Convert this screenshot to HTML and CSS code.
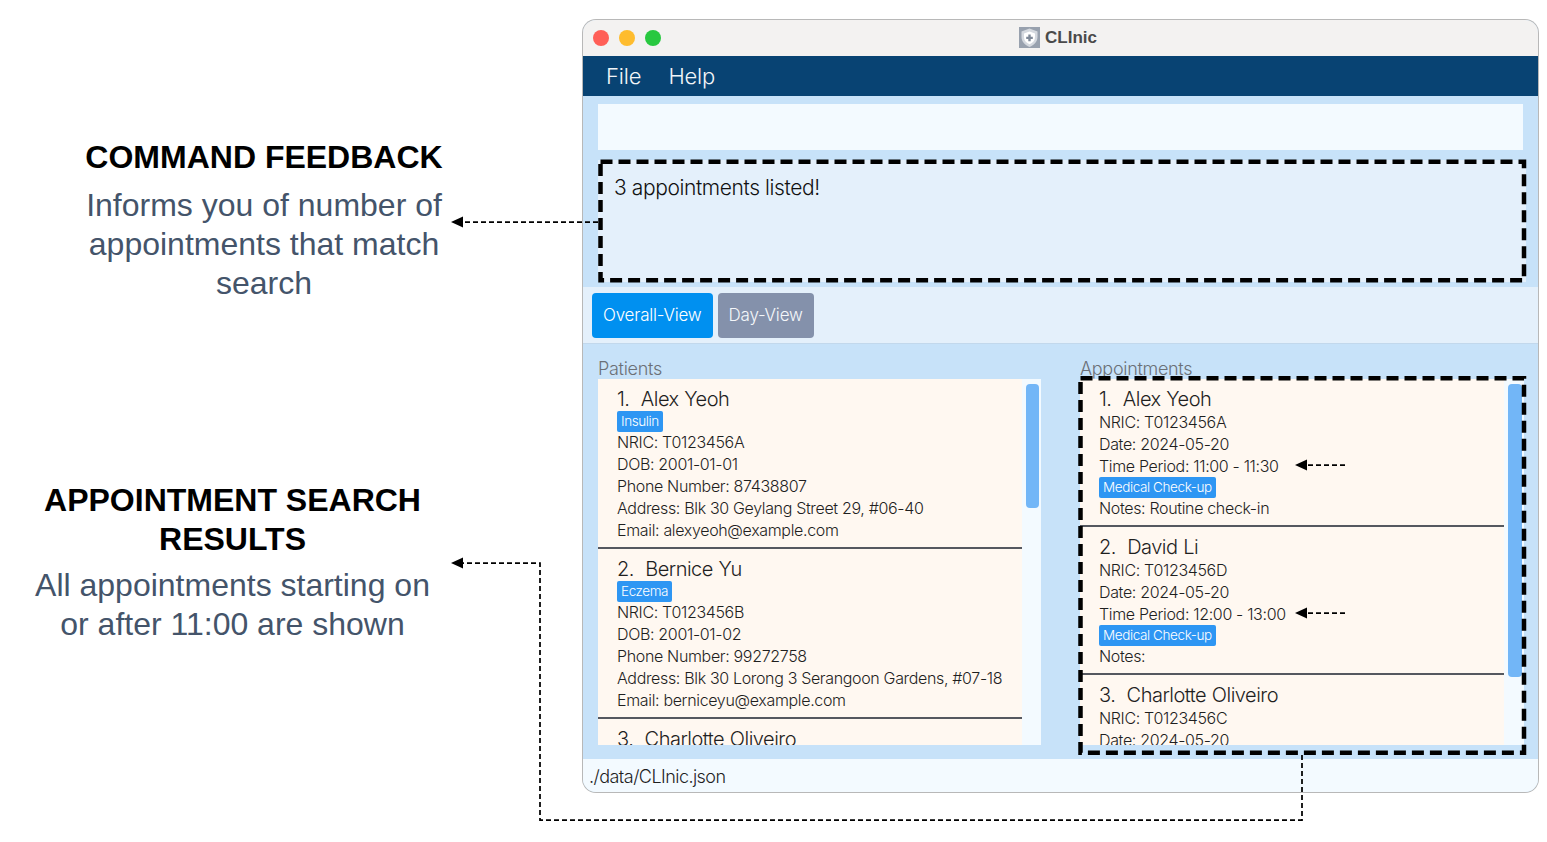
FILE: index.html
```html
<!DOCTYPE html>
<html lang="en">
<head>
  <meta charset="UTF-8">
  <title>CLInic</title>
  <link rel="stylesheet" href="styles.css">
</head>
<body>
  <aside class="notes">
    <section class="note note-feedback">
      <h2>COMMAND FEEDBACK</h2>
      <p>Informs you of number of<br>appointments that match<br>search</p>
    </section>
    <section class="note note-results">
      <h2>APPOINTMENT SEARCH<br>RESULTS</h2>
      <p>All appointments starting on<br>or after 11:00 are shown</p>
    </section>
  </aside>

  <div class="window">
    <div class="titlebar">
      <span class="light red"></span>
      <span class="light yellow"></span>
      <span class="light green"></span>
      <div class="title">
        <svg class="app-icon" width="21" height="21" viewBox="0 0 21 21">
          <rect width="21" height="21" fill="#98a1ae"/>
          <path d="M10.5 1.5 L18.5 4.4 V10 C18.5 14.8 15 18 10.5 20 C6 18 2.5 14.8 2.5 10 V4.4 Z" fill="#d5d9df"/>
          <path d="M10.5 4.4 L16 6.4 V10 C16 13.5 13.7 15.9 10.5 17.2 C7.3 15.9 5 13.5 5 10 V6.4 Z" fill="#fff"/>
          <path d="M9.3 7.6 H11.7 V9.7 H13.8 V12.1 H11.7 V14.2 H9.3 V12.1 H7.2 V9.7 H9.3 Z" fill="#7f8998"/>
        </svg>
        <span>CLInic</span>
      </div>
    </div>

    <nav class="menubar">
      <span>File</span>
      <span>Help</span>
    </nav>

    <div class="command-area">
      <div class="command-box"></div>
    </div>

    <div class="result-area">
      <div class="result-box">3 appointments listed!</div>
    </div>

    <div class="tabs">
      <button class="tab tab-active">Overall-View</button>
      <button class="tab">Day-View</button>
    </div>

    <main class="lists">
      <section class="panel panel-patients">
        <div class="panel-title">Patients</div>
        <div class="list">
          <div class="rows">
            <article class="card">
              <h3>1.&nbsp; Alex Yeoh</h3>
              <div class="tag-row"><span class="tag">Insulin</span></div>
              <p>NRIC: T0123456A</p>
              <p>DOB: 2001-01-01</p>
              <p>Phone Number: 87438807</p>
              <p>Address: Blk 30 Geylang Street 29, #06-40</p>
              <p>Email: alexyeoh@example.com</p>
            </article>
            <article class="card">
              <h3>2.&nbsp; Bernice Yu</h3>
              <div class="tag-row"><span class="tag">Eczema</span></div>
              <p>NRIC: T0123456B</p>
              <p>DOB: 2001-01-02</p>
              <p>Phone Number: 99272758</p>
              <p>Address: Blk 30 Lorong 3 Serangoon Gardens, #07-18</p>
              <p>Email: berniceyu@example.com</p>
            </article>
            <article class="card">
              <h3>3.&nbsp; Charlotte Oliveiro</h3>
            </article>
          </div>
          <div class="scrolltrack"><div class="thumb thumb-patients"></div></div>
        </div>
      </section>

      <section class="panel panel-appts">
        <div class="panel-title">Appointments</div>
        <div class="list">
          <div class="rows">
            <article class="card">
              <h3>1.&nbsp; Alex Yeoh</h3>
              <p>NRIC: T0123456A</p>
              <p>Date: 2024-05-20</p>
              <p>Time Period: 11:00 - 11:30</p>
              <div class="tag-row"><span class="tag">Medical Check-up</span></div>
              <p>Notes: Routine check-in</p>
            </article>
            <article class="card">
              <h3>2.&nbsp; David Li</h3>
              <p>NRIC: T0123456D</p>
              <p>Date: 2024-05-20</p>
              <p>Time Period: 12:00 - 13:00</p>
              <div class="tag-row"><span class="tag">Medical Check-up</span></div>
              <p>Notes:</p>
            </article>
            <article class="card">
              <h3>3.&nbsp; Charlotte Oliveiro</h3>
              <p>NRIC: T0123456C</p>
              <p>Date: 2024-05-20</p>
            </article>
          </div>
          <div class="scrolltrack"><div class="thumb thumb-appts"></div></div>
        </div>
      </section>
    </main>

    <footer class="statusbar">./data/CLInic.json</footer>
  </div>

  <!-- outlines and arrows drawn over the page -->
  <svg class="arrows" width="1547" height="842" viewBox="0 0 1547 842">
    <g fill="none" stroke="#000" stroke-width="4.5" stroke-dasharray="12 6">
      <rect x="600.5" y="161.7" width="923.5" height="118.6"/>
      <rect x="1080.5" y="378.3" width="443.5" height="374.4"/>
    </g>
    <g fill="none" stroke="#000" stroke-width="1.75" stroke-dasharray="5 3">
      <path d="M598 222 H462"/>
      <path d="M1302 755 V820 H540 V563 H462"/>
      <path d="M1345 465 H1306"/>
      <path d="M1345 613 H1306"/>
    </g>
    <g fill="#000">
      <path d="M451 222 L463 216.5 V227.5 Z"/>
      <path d="M451 563 L463 557.5 V568.5 Z"/>
      <path d="M1295 465 L1307 459.5 V470.5 Z"/>
      <path d="M1295 613 L1307 607.5 V618.5 Z"/>
    </g>
  </svg>
</body>
</html>
```

FILE: styles.css
```css
html, body {
  margin: 0;
  padding: 0;
}
body {
  width: 1547px;
  height: 842px;
  overflow: hidden;
  position: relative;
  display: flex;
  background: #fff;
  font-family: Inter, "Liberation Sans", sans-serif;
  color: #1f1f1f;
}

/* left side captions */
.notes {
  width: 583px;
  flex: none;
}
.note h2 {
  margin: 0;
  font-family: "Liberation Sans", Arial, sans-serif;
  font-size: 32px;
  line-height: 39px;
  font-weight: 700;
  color: #000;
}
.note p {
  margin: 0;
  font-family: "Liberation Sans", Arial, sans-serif;
  font-size: 32px;
  line-height: 39px;
  color: #44546a;
}
.note-feedback {
  width: 528px;
  padding-top: 138px;
  text-align: center;
}
.note-feedback p {
  margin-top: 9px;
}
.note-results {
  width: 465px;
  padding-top: 178px;
  text-align: center;
}
.note-results p {
  margin-top: 7px;
}

/* app window */
.window {
  width: 955px;
  height: 772px;
  margin-top: 20px;
  display: flex;
  flex-direction: column;
  border-radius: 13px;
  overflow: hidden;
  box-shadow: 0 0 0 1px #b8b8b8;
  background: #c7e2f9;
}
.titlebar {
  height: 36px;
  flex: none;
  display: flex;
  align-items: center;
  gap: 10px;
  padding-left: 10px;
  position: relative;
  background: #f3f2f1;
}
.light {
  width: 16px;
  height: 16px;
  border-radius: 50%;
}
.red { background: #ff5f57; }
.yellow { background: #febc2e; }
.green { background: #28c840; }
.title {
  position: absolute;
  left: 436px;
  top: 7px;
  display: flex;
  align-items: center;
  gap: 5px;
  font-family: "Liberation Sans", Arial, sans-serif;
  font-weight: 700;
  font-size: 17px;
  color: #4a4a4a;
}
.menubar {
  height: 40px;
  flex: none;
  display: flex;
  align-items: center;
  gap: 27px;
  padding-left: 23px;
  background: #084373;
  color: #f2f5f8;
  font-size: 22px;
  font-weight: 300;
  letter-spacing: -0.15px;
}
.command-area {
  height: 57px;
  flex: none;
  box-sizing: border-box;
  padding: 8px 15px 3px 15px;
}
.command-box {
  height: 46px;
  background: #f3faff;
}
.result-area {
  height: 134px;
  flex: none;
  box-sizing: border-box;
  padding: 7px 12px 5px 15px;
}
.result-box {
  height: 100%;
  box-sizing: border-box;
  padding: 15px 16px;
  background: #e4f0fb;
  font-size: 21px;
  font-weight: 300;
  letter-spacing: -0.4px;
  color: #111;
}
.tabs {
  height: 57px;
  flex: none;
  box-sizing: border-box;
  display: flex;
  gap: 5px;
  padding: 6px 9px;
  background: #e4f0fb;
  border-bottom: 1px solid #c2d8ec;
}
.tab {
  height: 45px;
  padding: 0 11px 2px;
  border: none;
  border-radius: 4px;
  background: #8491ab;
  color: #f4f7fa;
  font-family: Inter, sans-serif;
  font-size: 17px;
  font-weight: 300;
  letter-spacing: -0.2px;
}
.tab-active {
  background: #0090f0;
  color: #fff;
}

/* patient and appointment lists */
.lists {
  flex: 1;
  display: flex;
  min-height: 0;
}
.panel {
  display: flex;
  flex-direction: column;
  box-sizing: border-box;
  padding-top: 15px;
}
.panel-patients {
  width: 497px;
  padding-left: 15px;
  padding-right: 39px;
}
.panel-appts {
  width: 458px;
  padding-right: 14px;
}
.panel-title {
  height: 20px;
  font-size: 18px;
  line-height: 20px;
  font-weight: 300;
  letter-spacing: -0.3px;
  color: #6b7077;
}
.list {
  height: 366px;
  display: flex;
  background: #f3faff;
  overflow: hidden;
}
.rows {
  width: 424px;
  flex: none;
  background: #fff8f1;
  overflow: hidden;
}
.scrolltrack {
  flex: 1;
  padding: 5px 2px 0 4px;
}
.thumb {
  background: #72b6f7;
  border-radius: 4px;
}
.thumb-patients { height: 124px; }
.thumb-appts { height: 293px; }
.card {
  box-sizing: border-box;
  padding: 9px 0 0 19px;
  border-bottom: 2px solid #55585f;
}
.card:last-child {
  border-bottom: none;
}
.panel-patients .card { height: 170px; }
.panel-appts .card { height: 148px; }
.card h3 {
  margin: 0;
  font-size: 20px;
  line-height: 23px;
  font-weight: 300;
  letter-spacing: -0.5px;
  word-spacing: 0.5px;
  color: #1f1f1f;
}
.card p {
  margin: 0;
  font-size: 16px;
  line-height: 22px;
  font-weight: 300;
  letter-spacing: -0.34px;
  color: #1f1f1f;
}
.tag-row {
  height: 20px;
}
.tag {
  display: inline-block;
  padding: 0 4px;
  height: 21px;
  line-height: 21px;
  vertical-align: top;
  border-radius: 2px;
  background: #2e96f3;
  color: #fff;
  font-size: 13.5px;
  font-weight: 300;
  letter-spacing: -0.4px;
}
.statusbar {
  height: 33px;
  flex: none;
  box-sizing: border-box;
  padding: 7px 0 0 6px;
  background: #f3faff;
  font-size: 18px;
  font-weight: 300;
  letter-spacing: -0.55px;
  color: #1f1f1f;
}

.arrows {
  position: absolute;
  left: 0;
  top: 0;
  pointer-events: none;
}
```
